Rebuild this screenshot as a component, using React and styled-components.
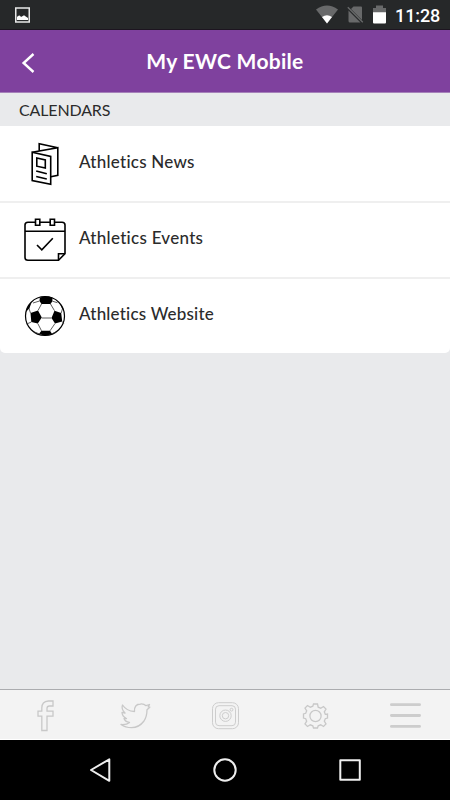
import React from 'react';
import styled, { createGlobalStyle } from 'styled-components';

const GlobalStyle = createGlobalStyle`
    * {
        box-sizing: border-box;
    }
    body {
        margin: 0;
        background: #e9eaec;
    }
`

const Screen = styled.div`
    display: flex;
    flex-direction: column;
    width: 450px;
    height: 800px;
    overflow: hidden;
    background: #e9eaec;
    font-family: Lato, "Liberation Sans", sans-serif;
    color: #2b2b2b;

    svg {
        display: block;
        flex: none;
    }
`

const StatusBar = styled.div`
    display: flex;
    align-items: center;
    height: 30px;
    padding: 0 10px 0 14px;
    background: #262829;
    border-bottom: 1px solid #1d1520;
`

const StatusIcons = styled.div`
    display: flex;
    align-items: center;
    gap: 9px;
    margin-left: auto;
`

const Clock = styled.span`
    width: 45px;
    padding-top: 2px;
    font: 500 18px/30px Roboto, sans-serif;
    letter-spacing: -0.1px;
    white-space: nowrap;
    color: #fff;
`

const Header = styled.header`
    display: grid;
    grid-template-columns: 60px 1fr 60px;
    align-items: center;
    height: 63px;
    background: #7f419e;
    border-bottom: 1px solid #a681ba;
`

const BackButton = styled.button`
    padding: 3px 0 0 21px;
    border: 0;
    background: none;
`

const Title = styled.h1`
    margin: 0;
    padding-bottom: 1px;
    font-size: 21px;
    font-weight: 700;
    line-height: 28px;
    letter-spacing: 0.3px;
    text-align: center;
    white-space: nowrap;
    color: #fff;
`

const SectionTitle = styled.h2`
    margin: 0;
    height: 33px;
    padding-left: 19px;
    font-size: 16px;
    font-weight: 400;
    line-height: 34px;
    letter-spacing: -0.15px;
`

const List = styled.ul`
    margin: 0;
    padding: 0;
    list-style: none;
    background: #fff;
    border-radius: 0 0 5px 5px;
`

const Row = styled.li`
    display: flex;
    align-items: center;
    height: 76px;

    &:first-child {
        height: 75px;
        padding-top: 1px;
    }
    & + & {
        border-top: 2px solid #efefef;
    }
`

const RowIcon = styled.div`
    display: flex;
    justify-content: center;
    width: 79px;
    padding-left: 11px;
`

const RowLabel = styled.span`
    padding-bottom: 5px;
    font-size: 17px;
    font-weight: 500;
    letter-spacing: ${props => props.$spacing};
    white-space: nowrap;
`

const TabBar = styled.nav`
    display: grid;
    grid-template-columns: repeat(5, 1fr);
    align-items: center;
    justify-items: center;
    height: 51px;
    margin-top: auto;
    padding-top: 3px;
    background: #f3f3f3;
    border-top: 1px solid #abacaf;
    border-bottom: 1px solid #fff;
`

const NavBar = styled.div`
    display: flex;
    align-items: center;
    justify-content: center;
    gap: 99px;
    height: 60px;
    background: #000;
`

const PictureIcon = () => (
    <svg width="17" height="18" viewBox="0 0 17 18">
        <rect x="1.75" y="2" width="13.5" height="14" fill="#262829" stroke="#e8e8e8" strokeWidth="1.5" />
        <path d="M3 14v-3c2-2 3-2 4 0 2-1 3-2 4-1s2 1 3 2v2z" fill="#fff" />
    </svg>
)

const WifiIcon = () => (
    <svg width="22" height="19" viewBox="0 0 22 19">
        <path d="M0 4.600Q11-3.800 22 4.600L11 18.500z" fill="#68696a" />
        <path d="M6 12q5-3.600 10 0l-5 6.500z" fill="#fff" />
    </svg>
)

const NoSimIcon = () => (
    <svg width="17" height="19" viewBox="0 0 17 19">
        <path d="M6.500 1.500H14a1 1 0 0 1 1 1v12.500L4 4zM1.500 5.500l12 12H3a1.500 1.500 0 0 1-1.500-1.500z" fill="#68696a" />
        <path d="M.8 2.200l15 15" stroke="#68696a" strokeWidth="1.300" />
    </svg>
)

const BatteryIcon = () => (
    <svg width="13" height="19" viewBox="0 0 13 19">
        <path d="M0 3h3V.500h7V3h3v5H0z" fill="#68696a" />
        <path d="M0 7.200h13v10.300a1 1 0 0 1-1 1H1a1 1 0 0 1-1-1z" fill="#fff" />
    </svg>
)

const BackIcon = () => (
    <svg width="15" height="22" viewBox="0 0 15 22">
        <path d="M12.500 2L2.600 11l9.900 9" fill="none" stroke="#fff" strokeWidth="2.400" />
    </svg>
)

const BrochureIcon = () => (
    <svg width="42" height="44" viewBox="0 0 42 44" fill="none" stroke="#000" strokeWidth="1.600">
        <path d="M8.200 10.300l18.500 4.200v27.700L8.200 38.500z" />
        <path d="M8.200 10.300l25.600-4.500v27.500l-7 1.500M15.200 8.800V1.700l18.600 4.100" />
        <path d="M12.800 16l8.500 2v8l-8.500-1.800zM12.200 29l10.600 2.800M12.200 34.500l10.600 2.500" />
    </svg>
)

const CalendarIcon = () => (
    <svg width="42" height="44" viewBox="0 0 42 44" fill="none" stroke="#000" strokeWidth="1.600">
        <path d="M11.500 4.200H4Q1 4.200 1 7v32.500Q1 42.200 4 42.200h30.500l6.500-6.500V7q0-2.800-3-2.800h-7.500M15.800 4.200h10.400M1 13.200h40" />
        <path d="M11.500 1.200h4.300v6h-4.300zM26.200 1.200h4.300v6h-4.300zM34.500 42.200v-6.500H41" />
        <path d="M13 27l4.800 4.800 11-11.500" />
    </svg>
)

const BallIcon = () => (
    <svg width="42" height="44" viewBox="0 0 42 44">
        <circle cx="21" cy="22" r="19.500" fill="#fff" stroke="#000" strokeWidth="1.200" />
        <path d="M6.500 19l7.500-2.500 3.800 7-4 6-6.500-1.500zM30.500 16.700l6.700 2.300 1 8.500-7.200 2-3.500-5.500zM15.800 3.500q6-2.200 12.600 0v3.700L26.500 10h-9l-2-3zM17.500 36.800h8.500l2 3q-6.500 3.500-13 0z" fill="#000" />
        <path d="M17.800 24H27.500M14 16.500L17.500 10M26.500 10l4 6.700M13.800 29.500l3.700 7.300M31 29.500l-5 7.300M15.500 7l-6.500 2M6.500 19L4.500 13M28.400 7.200l5 1.500M37.200 19l1.500-5M7.300 28l-4.500 2M38.200 27.500l1.500 2M15 39.800l-5-2M28 39.800l4-2" fill="none" stroke="#333" strokeWidth=".8" />
        <path d="M2 18q1-6 5.500-9.500L5.500 14zM35.500 9q3.500 3.500 4.500 8l-2-2.500z" fill="#000" />
    </svg>
)

const FacebookIcon = () => (
    <svg width="17" height="32" viewBox="0 1 17 32">
        <path d="M4.800 31.500V17.200H1v-5h3.800V9q0-6.500 6.500-7H16v5h-3.500q-2.500 0-2.500 2.300v2.900h6v5h-6v14.300z" fill="none" stroke="#c8c8c8" strokeWidth="1.300" />
    </svg>
)

const TwitterIcon = () => (
    <svg width="32" height="28" viewBox="-1 0 32 28">
        <path d="M2.500 3q4 6 12 6.500Q14 2.200 20.500 2q3.500-.3 5.500 1.700l3.500-1.200-1.300 2.400 1.600.3-2.800 2.600Q27 14.500 24 19q-5 6.700-12.500 6.700Q5.500 25.700 1 22.500q5.500.5 8.500-2-4.500-.8-5.500-4h2.500Q2 14.500 2 10.300l3 .7Q1 7 2.500 3z" fill="none" stroke="#c8c8c8" strokeWidth="1.300" strokeLinejoin="round" />
    </svg>
)

const InstagramIcon = () => (
    <svg width="28" height="28" viewBox="0 0 28 28" fill="none" stroke="#cdcdcd" strokeWidth="1">
        <rect x="1.500" y=".7" width="26" height="26" rx="6" />
        <rect x="4.500" y="3.700" width="20" height="20" rx="3.500" />
        <circle cx="14.500" cy="13.700" r="5.700" />
        <circle cx="14.500" cy="13.700" r="3.200" />
        <circle cx="20.500" cy="7.700" r="1.400" />
    </svg>
)

const GearIcon = () => (
    <svg width="28" height="28" viewBox="-.5 0 28 28" fill="none" stroke="#c8c8c8" strokeWidth="1.300">
        <path d="M12 2h4l.7 3.200 2.500 1 2.800-1.700 2.500 2.500-1.700 2.800 1 2.500L26 12v4l-2.200.7-1 2.500 1.700 2.800-2.500 2.500-2.800-1.700-2.500 1L16 26h-4l-.7-2.200-2.500-1L6 24.500 3.500 22l1.700-2.800-1-2.500L2 16v-4l2.200-.7 1-2.500L3.500 6 6 3.500l2.800 1.700 2.500-1z" />
        <circle cx="14" cy="14" r="5.600" />
    </svg>
)

const MenuIcon = () => (
    <svg width="31" height="26" viewBox="0 0 31 26">
        <path d="M1.400 1.700h28.200M1.400 12.500h28.200M1.400 23.400h28.200" stroke="#cdcdcd" strokeWidth="2.800" strokeLinecap="round" />
    </svg>
)

const NavIcon = ({ children }) => (
    <svg width="26" height="26" viewBox="0 0 26 26" fill="none" stroke="#eee" strokeWidth="2" strokeLinejoin="round">
        {children}
    </svg>
)

const links = [
    { label: 'Athletics News', icon: <BrochureIcon />, spacing: '0.25px' },
    { label: 'Athletics Events', icon: <CalendarIcon />, spacing: '0.28px' },
    { label: 'Athletics Website', icon: <BallIcon />, spacing: '0.2px' }
]

export default function App() {
    return (
        <Screen>
            <GlobalStyle />
            <StatusBar>
                <PictureIcon />
                <StatusIcons>
                    <WifiIcon />
                    <NoSimIcon />
                    <BatteryIcon />
                    <Clock>11:28</Clock>
                </StatusIcons>
            </StatusBar>
            <Header>
                <BackButton aria-label="Back"><BackIcon /></BackButton>
                <Title>My EWC Mobile</Title>
            </Header>
            <SectionTitle>CALENDARS</SectionTitle>
            <List>
                {links.map(link => (
                    <Row key={link.label}>
                        <RowIcon>{link.icon}</RowIcon>
                        <RowLabel $spacing={link.spacing}>{link.label}</RowLabel>
                    </Row>
                ))}
            </List>
            <TabBar>
                <FacebookIcon />
                <TwitterIcon />
                <InstagramIcon />
                <GearIcon />
                <MenuIcon />
            </TabBar>
            <NavBar>
                <NavIcon><path d="M22.300 2.300v21.500L4 13z" /></NavIcon>
                <NavIcon><circle cx="13" cy="13" r="10.700" /></NavIcon>
                <NavIcon><rect x="3.300" y="3.200" width="19.500" height="19.500" /></NavIcon>
            </NavBar>
        </Screen>
    )
}
